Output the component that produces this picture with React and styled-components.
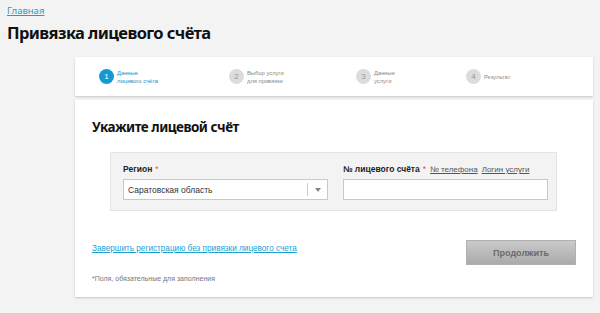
import React from "react";
import styled, { createGlobalStyle } from "styled-components";

const Global = createGlobalStyle`
  html, body { margin: 0; padding: 0; background: #f3f3f3; }
  body { font-family: "Liberation Sans", Arial, sans-serif; color: #222; }
  * { box-sizing: border-box; }
`;

const Page = styled.div`
  width: 600px;
  height: 313px;
  overflow: hidden;
`;

const Header = styled.header`
  padding: 5px 7px 0;
  height: 57px;
`;

const Crumb = styled.a`
  display: block;
  font-family: "Noto Sans", sans-serif;
  font-size: 9.5px;
  line-height: 12px;
  color: #1a9fd2;
  text-decoration: underline;
`;

const Title = styled.h1`
  margin: 4px 0 0;
  font-family: "Noto Sans", sans-serif;
  font-weight: 700;
  font-size: 16.5px;
  line-height: 24px;
  letter-spacing: -0.6px;
  color: #111;
`;

const Main = styled.main`
  margin-left: 75px;
  width: 518px;
  display: flex;
  flex-direction: column;
  gap: 4px;
`;

const Card = styled.section`
  background: #fff;
  box-shadow: 0 1px 2px rgba(0, 0, 0, 0.18);
`;

const Stepper = styled(Card)`
  height: 39px;
  display: grid;
  grid-template-columns: 130px 127px 110px 1fr;
  align-items: center;
  padding-left: 24px;
`;

const Step = styled.div`
  display: flex;
  align-items: center;
  gap: 3px;
`;

const StepNum = styled.span`
  width: 15px;
  height: 15px;
  border-radius: 50%;
  flex: none;
  display: flex;
  align-items: center;
  justify-content: center;
  font-size: 8px;
  background: ${(p) => (p.$active ? "#1499d3" : "#dcdcdc")};
  color: ${(p) => (p.$active ? "#fff" : "#999")};
`;

const StepText = styled.span`
  font-size: 5.8px;
  line-height: 8px;
  color: ${(p) => (p.$active ? "#1a8fc4" : "#888")};
`;

const FormCard = styled(Card)`
  height: 197px;
  padding: 17px 17px 0;
  display: flex;
  flex-direction: column;
`;

const Heading = styled.h2`
  margin: 0;
  font-family: "Noto Sans", sans-serif;
  font-weight: 700;
  font-size: 13.5px;
  line-height: 20px;
  letter-spacing: -0.5px;
  color: #111;
`;

const Panel = styled.div`
  margin: 15px 0 0 18px;
  width: 447px;
  height: 59px;
  background: #f3f3f3;
  border: 1px solid #e4e4e4;
  padding: 10px 0 0 12px;
  display: grid;
  grid-template-columns: 205px 205px;
  column-gap: 15px;
`;

const Field = styled.div`
  display: flex;
  flex-direction: column;
  gap: 4px;
`;

const LabelRow = styled.div`
  display: flex;
  align-items: baseline;
  gap: 4px;
  height: 12px;
  font-size: 8.5px;
  line-height: 12px;
  white-space: nowrap;
`;

const Label = styled.span`
  font-weight: 700;
  color: #222;
`;

const Star = styled.span`
  color: #e05050;
  font-weight: 400;
  margin-left: 3px;
`;

const AltLink = styled.a`
  color: #555;
  text-decoration: underline;
  font-size: 8px;
`;

const Box = styled.div`
  height: 21px;
  background: #fff;
  border: 1px solid #c9c9c9;
  display: flex;
  align-items: center;
  font-size: 8.5px;
  color: #333;
`;

const SelectValue = styled.span`
  flex: 1;
  padding-left: 4px;
`;

const SelectArrow = styled.span`
  width: 20px;
  height: 13px;
  border-left: 1px solid #ccc;
  display: flex;
  align-items: center;
  justify-content: center;
  &::after {
    content: "";
    border-left: 3px solid transparent;
    border-right: 3px solid transparent;
    border-top: 4px solid #888;
  }
`;

const Bottom = styled.div`
  margin-top: 29px;
  display: flex;
  justify-content: space-between;
  align-items: flex-start;
`;

const Left = styled.div`
  display: flex;
  flex-direction: column;
  gap: 20px;
  padding-top: 3px;
`;

const SkipLink = styled.a`
  font-size: 8.2px;
  line-height: 12px;
  color: #1a9fd2;
  text-decoration: underline;
`;

const Note = styled.p`
  margin: 0;
  font-size: 7px;
  color: #777;
`;

const Button = styled.button`
  width: 110px;
  height: 25px;
  border: 1px solid #b0b0b0;
  background: linear-gradient(#cacaca, #aaaaaa);
  color: #6a6a6a;
  font-family: "Liberation Sans", Arial, sans-serif;
  font-size: 9px;
  font-weight: 700;
  padding: 0;
`;

const steps = [
  ["1", "Данные", "лицевого счёта"],
  ["2", "Выбор услуги", "для привязки"],
  ["3", "Данные", "услуги"],
  ["4", "Результат"],
];

export default function App() {
  return (
    <Page>
      <Global />
      <Header>
        <Crumb href="#">Главная</Crumb>
        <Title>Привязка лицевого счёта</Title>
      </Header>
      <Main>
        <Stepper>
          {steps.map(([n, a, b], i) => (
            <Step key={n}>
              <StepNum $active={i === 0}>{n}</StepNum>
              <StepText $active={i === 0}>
                {a}
                {b && <br />}
                {b}
              </StepText>
            </Step>
          ))}
        </Stepper>
        <FormCard>
          <Heading>Укажите лицевой счёт</Heading>
          <Panel>
            <Field>
              <LabelRow>
                <Label>
                  Регион<Star>*</Star>
                </Label>
              </LabelRow>
              <Box>
                <SelectValue>Саратовская область</SelectValue>
                <SelectArrow />
              </Box>
            </Field>
            <Field>
              <LabelRow>
                <Label>
                  № лицевого счёта<Star>*</Star>
                </Label>
                <AltLink href="#">№ телефона</AltLink>
                <AltLink href="#">Логин услуги</AltLink>
              </LabelRow>
              <Box />
            </Field>
          </Panel>
          <Bottom>
            <Left>
              <SkipLink href="#">Завершить регистрацию без привязки лицевого счета</SkipLink>
              <Note>*Поля, обязательные для заполнения</Note>
            </Left>
            <Button>Продолжить</Button>
          </Bottom>
        </FormCard>
      </Main>
    </Page>
  );
}
